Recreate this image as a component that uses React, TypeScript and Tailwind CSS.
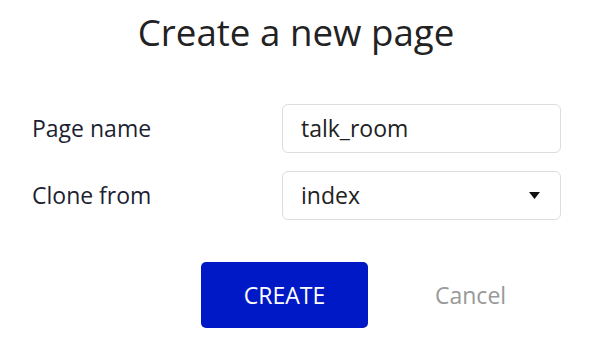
export default function App() {
  return (
    <div className="w-[598px] h-[340px] bg-white font-['Open_Sans',sans-serif] overflow-hidden">
      <h1 className="pt-[8px] text-center text-[36.7px] leading-[48px] text-[#222222] pr-[6px]">
        Create a new page
      </h1>

      <div className="mt-[48px] pl-[32px] pr-[37px] flex flex-col gap-[18px]">
        <div className="flex items-center justify-between">
          <label className="text-[23px] text-[#1d1f33]">Page name</label>
          <div className="w-[279px] h-[49px] border border-[#dddddd] rounded-[6px] flex items-center px-[18px] text-[23px] text-[#222222]">
            talk_room
          </div>
        </div>
        <div className="flex items-center justify-between">
          <label className="text-[23px] text-[#1d1f33]">Clone from</label>
          <div className="w-[279px] h-[49px] border border-[#dddddd] rounded-[6px] flex items-center justify-between pl-[18px] pr-[20px] text-[23px] text-[#222222]">
            <span>index</span>
            <svg width="11" height="7" viewBox="0 0 11 7">
              <path d="M0 0 L11 0 L5.5 7 Z" fill="#111111" />
            </svg>
          </div>
        </div>
      </div>

      <div className="mt-[42px] pl-[201px] flex items-center">
        <button className="w-[167px] h-[66px] rounded-[5px] bg-[#0019c6] text-white text-[23px]">
          CREATE
        </button>
        <button className="ml-[67px] text-[23px] text-[#999999]">Cancel</button>
      </div>
    </div>
  );
}
